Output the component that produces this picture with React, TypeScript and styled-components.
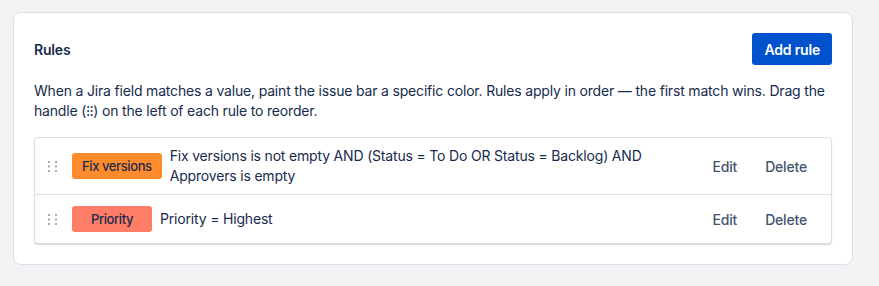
import React from "react";
import styled, { createGlobalStyle } from "styled-components";

const Global = createGlobalStyle`
  html, body { margin: 0; padding: 0; background: #F1F2F4; }
  body { font-family: Inter, "Noto Sans", sans-serif; color: #172B4D; -webkit-font-smoothing: antialiased; letter-spacing: -0.18px; }
`;

const Page = styled.div`
  padding: 12px 13px;
`;

const Card = styled.section`
  box-sizing: border-box;
  max-width: 840px;
  background: #fff;
  border: 1px solid #DCDFE4;
  border-radius: 8px;
  padding: 20px;
`;

const Header = styled.div`
  display: flex;
  align-items: center;
  justify-content: space-between;
  height: 32px;
`;

const Title = styled.h2`
  margin: 0;
  font-size: 14px;
  font-weight: 600;
  color: #172B4D;
`;

const PrimaryButton = styled.button`
  height: 32px;
  padding: 0 12px;
  border: none;
  border-radius: 3px;
  background: #0052CC;
  color: #fff;
  font-family: inherit;
  letter-spacing: inherit;
  font-size: 14px;
  font-weight: 600;
  cursor: pointer;
`;

const Description = styled.p`
  margin: 16px 0;
  font-size: 14px;
  line-height: 20px;
  color: #172B4D;
`;

const List = styled.div`
  border: 1px solid #DCDFE4;
  border-radius: 4px;
  box-shadow: 0 1px 1px rgba(9, 30, 66, 0.2);
  background: #fff;
`;

const Row = styled.div`
  display: flex;
  align-items: center;
  gap: 8px;
  min-height: 48px;
  padding: 8px 12px;
  box-sizing: border-box;
  & + & {
    border-top: 1px solid #DCDFE4;
  }
`;

const Handle = styled.span`
  display: flex;
  width: 13px;
  margin-right: 4px;
  color: #8590A2;
`;

const Badge = styled.span<{ $bg: string }>`
  flex: none;
  box-sizing: border-box;
  min-width: 80px;
  height: 26px;
  padding: 0 10px;
  display: inline-flex;
  align-items: center;
  justify-content: center;
  border-radius: 3px;
  background: ${(p) => p.$bg};
  color: #172B4D;
  font-size: 13px;
  font-weight: 500;
  letter-spacing: -0.4px;
`;

const RuleText = styled.span`
  flex: 1;
  font-size: 14px;
  line-height: 20px;
  color: #172B4D;
  padding-right: 16px;
`;

const Actions = styled.div`
  display: flex;
  gap: 4px;
  flex: none;
`;

const SubtleButton = styled.button`
  height: 32px;
  padding: 0 12px;
  border: none;
  background: transparent;
  border-radius: 3px;
  color: #44546F;
  font-family: inherit;
  letter-spacing: inherit;
  font-size: 14px;
  font-weight: 500;
  cursor: pointer;
`;

const DragIcon = () => (
  <svg width="13" height="13" viewBox="0 0 13 13" fill="currentColor">
    {[2, 9].map((x) =>
      [2, 6.5, 11].map((y) => <circle key={`${x}-${y}`} cx={x} cy={y} r={1} />)
    )}
  </svg>
);

const rules = [
  {
    field: "Fix versions",
    color: "#FF8B2C",
    text: "Fix versions is not empty AND (Status = To Do OR Status = Backlog) AND Approvers is empty",
  },
  { field: "Priority", color: "#FF7D66", text: "Priority = Highest" },
];

export default function App() {
  return (
    <>
      <Global />
      <Page>
        <Card>
          <Header>
            <Title>Rules</Title>
            <PrimaryButton>Add rule</PrimaryButton>
          </Header>
          <Description>
            When a Jira field matches a value, paint the issue bar a specific color. Rules apply in order — the
            first match wins. Drag the handle (⁝⁝) on the left of each rule to reorder.
          </Description>
          <List>
            {rules.map((r) => (
              <Row key={r.field}>
                <Handle>
                  <DragIcon />
                </Handle>
                <Badge $bg={r.color}>{r.field}</Badge>
                <RuleText>{r.text}</RuleText>
                <Actions>
                  <SubtleButton>Edit</SubtleButton>
                  <SubtleButton>Delete</SubtleButton>
                </Actions>
              </Row>
            ))}
          </List>
        </Card>
      </Page>
    </>
  );
}
